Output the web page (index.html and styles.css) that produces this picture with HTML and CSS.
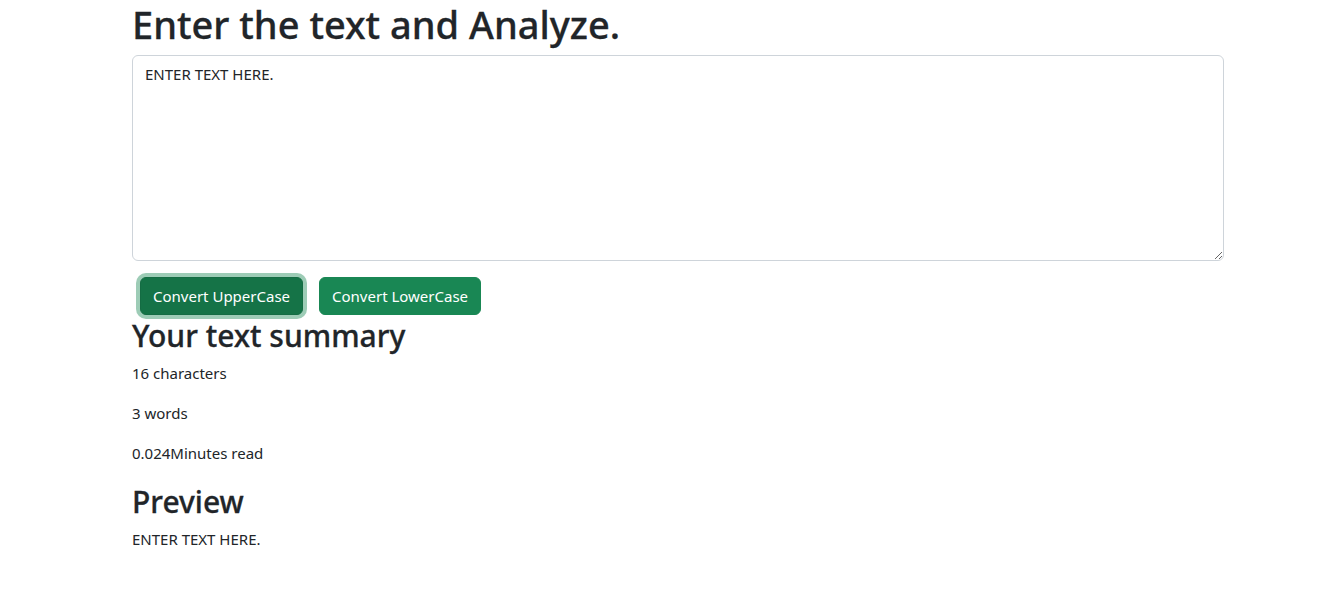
FILE: index.html
```html
<!DOCTYPE html>
<html lang="en">
<head>
<meta charset="utf-8">
<title>TextUtils</title>
<link rel="stylesheet" href="styles.css">
</head>
<body>
<div class="container">
  <h1 class="title">Enter the text and Analyze.</h1>
  <div class="field">
    <textarea class="text-input" rows="8">ENTER TEXT HERE.</textarea>
  </div>
  <div class="actions">
    <button class="btn btn-active" type="button">Convert UpperCase</button>
    <button class="btn" type="button">Convert LowerCase</button>
  </div>
  <h2 class="section">Your text summary</h2>
  <p class="line">16 characters</p>
  <p class="line">3 words</p>
  <p class="line">0.024Minutes read</p>
  <h2 class="section">Preview</h2>
  <p class="line">ENTER TEXT HERE.</p>
</div>
</body>
</html>
```
FILE: styles.css
```css
* { box-sizing: border-box; }
body {
  margin: 0;
  background: #fff;
  color: #212529;
  font-family: "Noto Sans", "Open Sans", sans-serif;
  font-size: 15px;
  line-height: 24px;
}
.container {
  width: 1092px;
  margin-left: 132px;
}
.title {
  margin: 0 0 7px;
  font-size: 38px;
  font-weight: 500;
  line-height: 48px;
  -webkit-text-stroke: 0.3px #212529;
}
.field { margin-bottom: 16px; }
.text-input {
  display: block;
  width: 100%;
  height: 206px;
  padding: 6px 12px;
  border: 1px solid #ced4da;
  border-radius: 6px;
  font-family: inherit;
  font-size: 15px;
  line-height: 24px;
  color: #212529;
  resize: vertical;
  outline: none;
}
.actions {
  display: flex;
  gap: 16px;
  padding-left: 8px;
}
.btn {
  height: 38px;
  padding: 6px 12px;
  border: 1px solid #198754;
  border-radius: 6px;
  background: #198754;
  color: #fff;
  font-family: inherit;
  font-size: 15px;
  line-height: 24px;
}
.btn-active {
  background: #157347;
  border-color: #146c43;
  box-shadow: 0 0 0 4px rgba(60, 153, 110, 0.5);
}
.section {
  margin: 0 0 8px;
  padding-top: 3px;
  font-size: 30px;
  font-weight: 500;
  line-height: 35px;
  -webkit-text-stroke: 0.3px #212529;
}
.line {
  margin: 0 0 16px;
}
```
